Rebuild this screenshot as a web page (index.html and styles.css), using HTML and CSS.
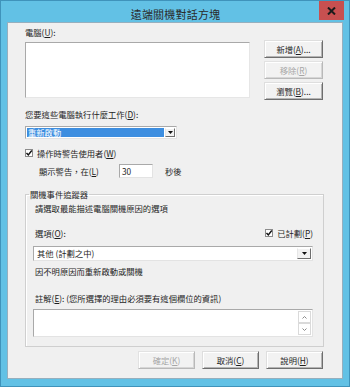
FILE: index.html
```html
<!DOCTYPE html>
<html lang="zh-Hant">
<head>
<meta charset="utf-8">
<link rel="stylesheet" href="styles.css">
</head>
<body>
<div class="window">
  <div class="titlebar">
    <div></div>
    <div class="title">遠端關機對話方塊</div>
    <div class="close"><svg width="9" height="8" viewBox="0 0 9 8"><path d="M1 0.5 L8 7.5 M8 0.5 L1 7.5" stroke="#1b1b1b" stroke-width="2"/></svg></div>
  </div>
  <div class="content">
    <div class="label">電腦(<u>U</u>):</div>
    <div class="computers">
      <div class="listbox"></div>
      <div class="side-buttons">
        <div class="btn">新增(<u>A</u>)...</div>
        <div class="btn disabled">移除(<u>R</u>)</div>
        <div class="btn">瀏覽(<u>B</u>)...</div>
      </div>
    </div>
    <div class="label action-label">您要這些電腦執行什麼工作(<u>D</u>):</div>
    <div class="select select-action">
      <div class="sel-text highlighted">重新啟動</div>
      <div class="drop"><svg width="5" height="3" viewBox="0 0 5 3"><path d="M0 0 H5 L2.5 3 Z" fill="#111"/></svg></div>
    </div>
    <div class="check-row warn">
      <span class="checkbox"><svg width="8" height="8" viewBox="0 0 8 8"><path d="M1.5 4 L3.3 6 L6.8 1.5" stroke="#111" stroke-width="1.4" fill="none"/></svg></span>
      <span>操作時警告使用者(<u>W</u>)</span>
    </div>
    <div class="delay-row">
      <span class="delay-label">顯示警告，在(<u>L</u>)</span>
      <div class="input">30</div>
      <span class="unit">秒後</span>
    </div>
    <fieldset class="group">
      <legend>關機事件追蹤器</legend>
      <div class="text intro">請選取最能描述電腦關機原因的選項</div>
      <div class="option-row">
        <span>選項(<u>O</u>):</span>
        <span class="check-row">
          <span class="checkbox"><svg width="8" height="8" viewBox="0 0 8 8"><path d="M1.5 4 L3.3 6 L6.8 1.5" stroke="#111" stroke-width="1.4" fill="none"/></svg></span>
          <span>已計劃(<u>P</u>)</span>
        </span>
      </div>
      <div class="select select-reason">
        <div class="sel-text">其他 (計劃之中)</div>
        <div class="drop"><svg width="5" height="3" viewBox="0 0 5 3"><path d="M0 0 H5 L2.5 3 Z" fill="#111"/></svg></div>
      </div>
      <div class="text desc">因不明原因而重新啟動或關機</div>
      <div class="text comment-label">註解(<u>E</u>): (您所選擇的理由必須要有這個欄位的資訊)</div>
      <div class="textarea">
        <div class="scroll">
          <div class="arrow"><svg width="5" height="3" viewBox="0 0 5 3"><path d="M0.5 2.5 L2.5 0.5 L4.5 2.5" stroke="#8a8a8a" fill="none"/></svg></div>
          <div class="arrow"><svg width="5" height="3" viewBox="0 0 5 3"><path d="M0.5 0.5 L2.5 2.5 L4.5 0.5" stroke="#8a8a8a" fill="none"/></svg></div>
        </div>
      </div>
    </fieldset>
    <div class="footer">
      <div class="btn disabled">確定(<u>K</u>)</div>
      <div class="btn">取消(<u>C</u>)</div>
      <div class="btn">說明(<u>H</u>)</div>
    </div>
  </div>
</div>
</body>
</html>
```

FILE: styles.css
```css
html, body {
  margin: 0;
  padding: 0;
  background: #ffffff;
}
body {
  font-family: "Noto Sans CJK TC", "Noto Sans", sans-serif;
  font-size: 8.3px;
  line-height: 12px;
  color: #1e1e1e;
}
.window {
  width: 350px;
  height: 387px;
  box-sizing: border-box;
  border: 1px solid #3f93bb;
  background: #62c1e5;
  padding: 0 6px 7px 6px;
  display: flex;
  flex-direction: column;
}
.titlebar {
  height: 21px;
  display: grid;
  grid-template-columns: 1fr auto 1fr;
  align-items: start;
  margin-right: -1px;
}
.title {
  font-size: 11px;
  line-height: 12px;
  color: #2a2a2a;
  padding-top: 7px;
  letter-spacing: 0.2px;
}
.close {
  justify-self: end;
  width: 25px;
  height: 19px;
  background: #c75050;
  display: flex;
  align-items: center;
  justify-content: center;
}
.content {
  flex: 1;
  background: #f0f0f0;
  border: 1px solid #96afbe;
  padding: 3px 18px 0 17px;
  display: flex;
  flex-direction: column;
}
u {
  text-decoration: underline;
  text-underline-offset: 1px;
}
.computers {
  margin-top: 2px;
  display: flex;
  gap: 14px;
}
.listbox {
  width: 225px;
  height: 56px;
  margin-top: 2px;
  box-sizing: border-box;
  background: #fff;
  border: 1px solid;
  border-color: #a9a9a9 #e6e6e6 #e6e6e6 #a9a9a9;
}
.side-buttons {
  display: flex;
  flex-direction: column;
  gap: 3px;
}
.btn {
  width: 59px;
  height: 18px;
  box-sizing: border-box;
  background: #f2f2f2;
  border: 1px solid;
  border-color: #dedede #6e6e6e #6e6e6e #dedede;
  box-shadow: inset 1px 1px #ffffff, inset -1px -1px #b4b4b4;
  display: flex;
  align-items: center;
  justify-content: center;
  color: #1e1e1e;
}
.btn.disabled {
  color: #a6a6a6;
  border-color: #e2e2e2 #b9b9b9 #b9b9b9 #e2e2e2;
  box-shadow: inset 1px 1px #ffffff, inset -1px -1px #d6d6d6;
}
.action-label {
  margin-top: 8px;
}
.select {
  display: flex;
  box-sizing: border-box;
  background: #fff;
  border: 1px solid;
  border-color: #a9a9a9 #e3e3e3 #e3e3e3 #a9a9a9;
  padding: 1px;
}
.select-action {
  margin-top: 6px;
  width: 152px;
  height: 13px;
}
.sel-text {
  flex: 1;
  line-height: 9px;
  padding-left: 1px;
  white-space: nowrap;
}
.sel-text.highlighted {
  background: #3d8ee0;
  color: #ffffff;
}
.drop {
  width: 10px;
  box-sizing: border-box;
  margin-left: 1px;
  background: #f2f2f2;
  border: 1px solid;
  border-color: #ffffff #6e6e6e #6e6e6e #e6e6e6;
  display: flex;
  align-items: center;
  justify-content: center;
}
.check-row {
  display: flex;
  align-items: center;
  gap: 4px;
}
.warn {
  margin-top: 8px;
}
.checkbox {
  width: 8px;
  height: 8px;
  box-sizing: border-box;
  background: #fff;
  border: 1px solid #8c8c8c;
  display: flex;
  align-items: center;
  justify-content: center;
}
.checkbox svg {
  flex: none;
}
.delay-row {
  margin-top: 5px;
  display: flex;
  align-items: center;
  height: 14px;
  padding-left: 14px;
}
.delay-label {
  width: 80px;
}
.input {
  width: 34px;
  height: 14px;
  box-sizing: border-box;
  background: #fff;
  border: 1px solid;
  border-color: #a9a9a9 #e3e3e3 #e3e3e3 #a9a9a9;
  padding-left: 2px;
  line-height: 12px;
}
.unit {
  margin-left: 12px;
}
.group {
  margin: 10px 0 0 0;
  padding: 2px 10px 9px 7px;
  border: 1px solid #cfcfcf;
  box-shadow: inset 1px 1px #ffffff;
  min-width: 0;
}
.group legend {
  padding: 0 1px;
  margin-left: -4px;
  line-height: 12px;
}
.text {
  padding-left: 2px;
}
.option-row {
  margin-top: 13px;
  padding-left: 2px;
  display: flex;
  justify-content: space-between;
  align-items: center;
}
.select-reason {
  margin-top: 7px;
  height: 15px;
  padding: 1px 1px 1px 2px;
}
.select-reason .sel-text {
  line-height: 11px;
}
.select-reason .drop {
  width: 14px;
}
.desc {
  margin-top: 4px;
}
.comment-label {
  margin-top: 15px;
}
.textarea {
  margin-top: 5px;
  height: 28px;
  box-sizing: border-box;
  background: #fff;
  border: 1px solid;
  border-color: #a9a9a9 #e3e3e3 #e3e3e3 #a9a9a9;
  display: flex;
  justify-content: flex-end;
}
.scroll {
  width: 13px;
  display: flex;
  flex-direction: column;
  justify-content: space-between;
  padding: 1px 1px 1px 0;
  background: #ffffff;
}
.arrow {
  height: 12px;
  box-sizing: border-box;
  border: 1px solid #dadada;
  display: flex;
  align-items: center;
  justify-content: center;
}
.footer {
  margin-top: 4px;
  display: flex;
  justify-content: flex-end;
  gap: 7px;
  padding-right: 1px;
}
.footer .btn {
  width: 57px;
}
```
